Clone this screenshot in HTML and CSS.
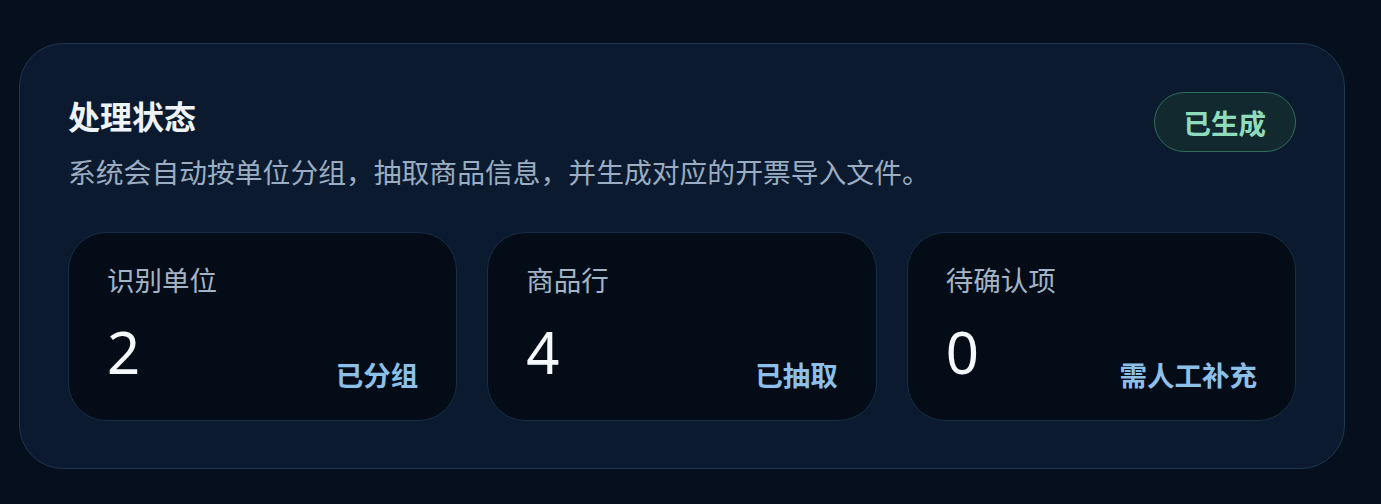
FILE: index.html
```html
<!DOCTYPE html>
<html lang="zh-CN">
<head>
<meta charset="utf-8">
<link rel="stylesheet" href="styles.css">
</head>
<body>
<section class="panel">
  <div class="panel-head">
    <div class="head-text">
      <h2 class="title">处理状态</h2>
      <p class="desc">系统会自动按单位分组，抽取商品信息，并生成对应的开票导入文件。</p>
    </div>
    <span class="badge">已生成</span>
  </div>
  <div class="stats">
    <div class="stat">
      <div class="stat-label">识别单位</div>
      <div class="stat-row">
        <span class="stat-num">2</span>
        <span class="stat-tag">已分组</span>
      </div>
    </div>
    <div class="stat">
      <div class="stat-label">商品行</div>
      <div class="stat-row">
        <span class="stat-num">4</span>
        <span class="stat-tag">已抽取</span>
      </div>
    </div>
    <div class="stat">
      <div class="stat-label">待确认项</div>
      <div class="stat-row">
        <span class="stat-num">0</span>
        <span class="stat-tag">需人工补充</span>
      </div>
    </div>
  </div>
</section>
</body>
</html>
```
FILE: styles.css
```css
html, body {
  margin: 0;
  background: #060f1d;
}
body {
  padding: 43px 36px 0 19px;
  font-family: "Noto Sans CJK SC", "Noto Sans", sans-serif;
}
.panel {
  box-sizing: border-box;
  height: 426px;
  background: #0b1a2e;
  border: 1.5px solid #1f3852;
  border-radius: 44px;
  padding: 48px 48px 48px 48px;
  display: flex;
  flex-direction: column;
}
.panel-head {
  display: flex;
  justify-content: space-between;
  align-items: flex-start;
}
.title {
  margin: 0;
  font-size: 32px;
  line-height: 46px;
  font-weight: 700;
  color: #eef3f8;
}
.desc {
  margin: 14px 0 0;
  font-size: 27.8px;
  line-height: 38px;
  color: #9aadc2;
}
.badge {
  box-sizing: border-box;
  height: 60px;
  padding: 0 29px;
  display: flex;
  align-items: center;
  border: 1.5px solid #2f6e58;
  background: #11292f;
  border-radius: 30px;
  color: #8fdcbd;
  font-size: 27.5px;
  font-weight: 700;
}
.stats {
  margin-top: 42px;
  display: grid;
  grid-template-columns: 1fr 1fr 1fr;
  gap: 30px;
}
.stat {
  box-sizing: border-box;
  height: 189px;
  background: #040c18;
  border: 1.5px solid #172e46;
  border-radius: 38px;
  padding: 26px 38px 0 38px;
  display: flex;
  flex-direction: column;
}
.stat-label {
  font-size: 27.5px;
  line-height: 40px;
  color: #a3b4c6;
}
.stat-row {
  margin-top: 18px;
  display: flex;
  justify-content: space-between;
  align-items: flex-end;
}
.stat-num {
  font-family: "Noto Sans", sans-serif;
  font-size: 58px;
  line-height: 70px;
  color: #f6f9fc;
}
.stat-tag {
  font-size: 27.5px;
  line-height: 40px;
  font-weight: 700;
  color: #8cc0e8;
  margin-bottom: -7px;
}
```
